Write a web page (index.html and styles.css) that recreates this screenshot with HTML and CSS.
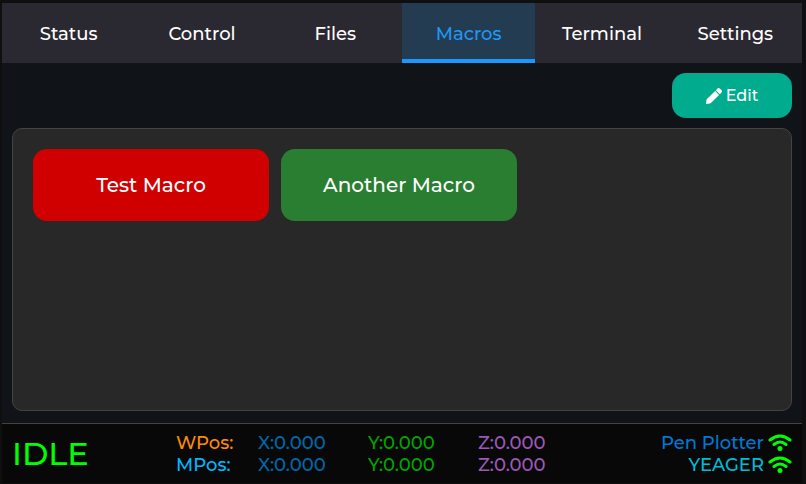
FILE: index.html
```html
<!DOCTYPE html>
<html lang="en">
<head>
    <meta charset="UTF-8">
    <meta name="viewport" content="width=device-width, initial-scale=1.0">
    <title>Macros</title>
    <link rel="stylesheet" href="styles.css">
</head>
<body>
    <div class="app">
        <nav class="tabs">
            <button class="tab">Status</button>
            <button class="tab">Control</button>
            <button class="tab">Files</button>
            <button class="tab active">Macros</button>
            <button class="tab">Terminal</button>
            <button class="tab">Settings</button>
        </nav>
        <main class="content">
            <div class="toolbar">
                <button class="edit-button">
                    <svg class="edit-icon" viewBox="0 0 512 512" aria-hidden="true">
                        <path d="M498 142l-47 47c-5 5-12 5-17 0L323 78c-5-5-5-12 0-17l47-47c19-19 49-19 68 0l60 60c19 19 19 49 0 68z"/>
                        <path d="M284 101L22 363 0 484c-3 17 11 31 27 28l122-21 262-262c5-5 5-12 0-17L301 101c-5-5-13-5-17 0z"/>
                    </svg>
                    <span>Edit</span>
                </button>
            </div>
            <section class="macro-panel">
                <button class="macro red">Test Macro</button>
                <button class="macro green">Another Macro</button>
            </section>
        </main>
        <footer class="status-bar">
            <div class="state">IDLE</div>
            <div class="positions">
                <span class="wpos">WPos:</span>
                <span class="axis-x">X:0.000</span>
                <span class="axis-y">Y:0.000</span>
                <span class="axis-z">Z:0.000</span>
                <span class="mpos">MPos:</span>
                <span class="axis-x">X:0.000</span>
                <span class="axis-y">Y:0.000</span>
                <span class="axis-z">Z:0.000</span>
            </div>
            <div class="connections">
                <div class="connection machine">
                    <span>Pen Plotter</span>
                    <svg class="wifi" viewBox="0 0 24 18" aria-hidden="true">
                        <path d="M2 6Q12-2 22 6M6 10.500Q12 5.500 18 10.500"/>
                        <circle cx="12" cy="14.500" r="2.500"/>
                    </svg>
                </div>
                <div class="connection network">
                    <span>YEAGER</span>
                    <svg class="wifi" viewBox="0 0 24 18" aria-hidden="true">
                        <path d="M2 6Q12-2 22 6M6 10.500Q12 5.500 18 10.500"/>
                        <circle cx="12" cy="14.500" r="2.500"/>
                    </svg>
                </div>
            </div>
        </footer>
    </div>
</body>
</html>
```

FILE: styles.css
```css
* {
    box-sizing: border-box;
}
body, html {
    margin: 0;
    height: 100%;
}
body {
    padding: 3px 4px 1px 2px;
    background-color: #0f0f0f;
    color: #fff;
    font-family: Montserrat, Inter, sans-serif;
    font-size: 18px;
    font-weight: 500;
}
button {
    padding: 0;
    border: none;
    color: #fff;
    font: inherit;
    cursor: pointer;
}
.app {
    display: flex;
    flex-direction: column;
    height: 100%;
    background-color: #101418;
}
.tabs {
    display: grid;
    grid-template-columns: repeat(6, 1fr);
    height: 60px;
    background-color: #2a2831;
}
.tab {
    padding-top: 6px;
    border-bottom: 4px solid transparent;
    background: none;
}
.tab.active {
    color: #2196f3;
    background-color: #233c52;
    border-bottom-color: #1e96ff;
}
.content {
    flex: 1;
    display: flex;
    flex-direction: column;
    gap: 10px;
    padding: 10px 10px 12px;
}
.toolbar {
    display: flex;
    justify-content: flex-end;
}
.edit-button {
    display: flex;
    align-items: center;
    justify-content: center;
    gap: 4px;
    width: 120px;
    height: 45px;
    border-radius: 14px;
    background-color: #00ab8e;
    font-size: 16px;
}
.edit-icon {
    width: 16px;
    height: 16px;
    fill: #fff;
}
.macro-panel {
    flex: 1;
    display: grid;
    grid-template-columns: repeat(3, 1fr);
    grid-auto-rows: 72px;
    align-content: start;
    gap: 12px;
    padding: 20px 26px 20px 20px;
    border: 1px solid #414441;
    border-radius: 10px;
    background-color: #282828;
}
.macro {
    border-radius: 14px;
    font-size: 20px;
}
.red {
    background-color: #d00000;
}
.green {
    background-color: #2a7e31;
}
.status-bar {
    display: grid;
    grid-template-columns: 164px 1fr auto;
    align-items: center;
    height: 60px;
    padding: 0 10px;
    border-top: 1px solid #414441;
    background-color: #080808;
    line-height: 22px;
}
.state {
    color: #00ff00;
    font-size: 32px;
}
.positions {
    display: grid;
    grid-template-columns: 82px 110px 110px auto;
    justify-content: start;
}
.wpos {
    color: #ff8c00;
}
.mpos {
    color: #00b7ff;
}
.axis-x {
    color: #0068aa;
}
.axis-y {
    color: #00a500;
}
.axis-z {
    color: #9b59b6;
}
.connection {
    display: flex;
    align-items: center;
    justify-content: flex-end;
    gap: 4px;
}
.machine {
    color: #0078d7;
}
.network {
    color: #00bcd4;
}
.wifi {
    width: 24px;
    height: 18px;
    fill: none;
    stroke: #00ff00;
    stroke-width: 3;
    stroke-linecap: round;
}
.wifi circle {
    fill: #00ff00;
    stroke: none;
}
```
